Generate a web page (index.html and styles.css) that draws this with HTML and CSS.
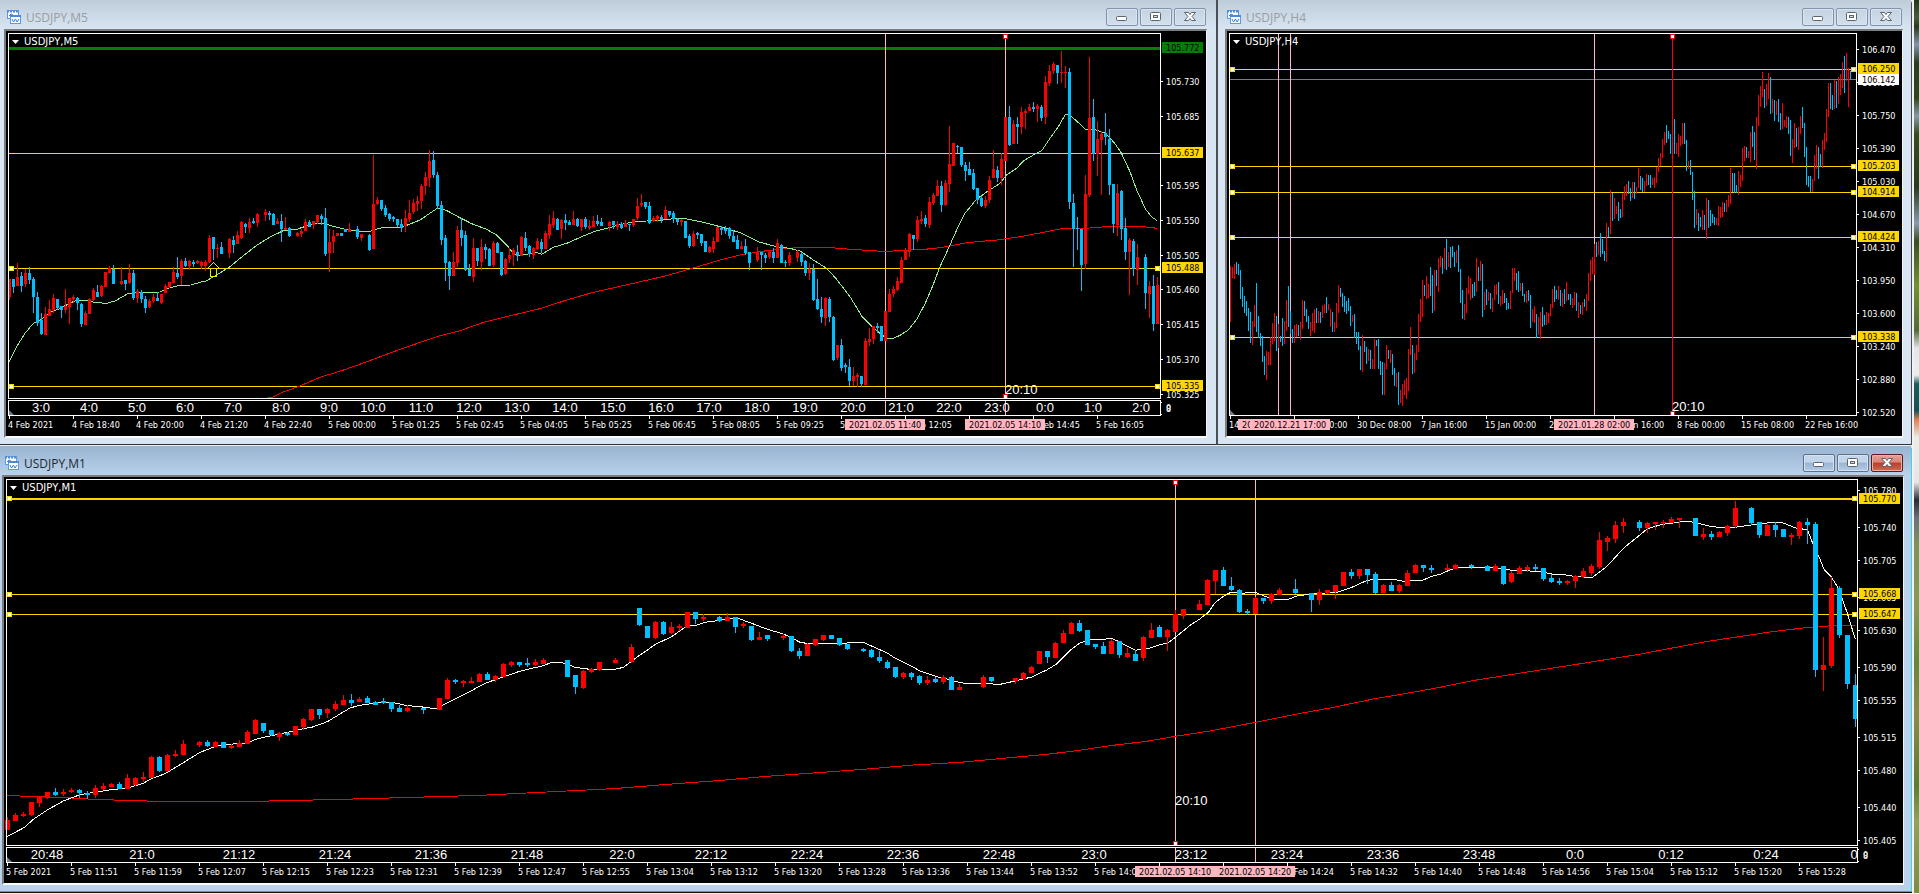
FILE: index.html
```html
<!DOCTYPE html>
<html lang="en">
<head>
<meta charset="utf-8">
<title>USDJPY charts</title>
<link rel="stylesheet" href="styles.css">
</head>
<body>
<svg class="defs" aria-hidden="true">
  <defs>
    <symbol id="chart-icon" viewBox="0 0 14 14">
      <rect x="0.500" y="0.500" width="11" height="8" fill="#fff" stroke="#5a9ae6"/>
      <path d="M0 1.500h12" stroke="#4a8ad8" stroke-width="2" stroke-dasharray="2 1"/>
      <path d="M2 6l2-2 2 1" stroke="#3c7fd6" fill="none"/>
      <rect x="3.500" y="5.500" width="10" height="8" fill="#fff" stroke="#5a9ae6"/>
      <path d="M3 6h11" stroke="#4a8ad8" stroke-width="2"/>
      <path d="M5 9l1.500 3 2-3 1.500 3 2-3" stroke="#3c7fd6" fill="none"/>
    </symbol>
    <symbol id="min-icon" viewBox="0 0 30 16">
      <rect x="9.500" y="7.500" width="10" height="4" rx="1" fill="#fff" stroke="#5b6470"/>
    </symbol>
    <symbol id="max-icon" viewBox="0 0 30 16">
      <rect x="9.500" y="3.500" width="10" height="8" rx="1" fill="#fff" stroke="#5b6470"/>
      <rect x="12.500" y="6.500" width="4" height="2" fill="#cfdcec" stroke="#5b6470"/>
    </symbol>
    <symbol id="close-icon" viewBox="0 0 30 16">
      <path d="M9.500 3.500h4l1.500 2 1.500-2h4l-3.500 4 3.500 4h-4l-1.500-2-1.500 2h-4l3.500-4z" fill="#fff" stroke="#5b6470"/>
    </symbol>
  </defs>
</svg>
<main class="desktop">
  <section class="window window-m5" aria-label="USDJPY,M5">
    <header class="title-bar">
      <svg class="title-icon" aria-hidden="true"><use href="#chart-icon"/></svg>
      <h2 class="title">USDJPY,M5</h2>
      <button class="win-btn" aria-label="Minimize"><svg class="btn-icon"><use href="#min-icon"/></svg></button>
      <button class="win-btn" aria-label="Maximize"><svg class="btn-icon"><use href="#max-icon"/></svg></button>
      <button class="win-btn" aria-label="Close"><svg class="btn-icon"><use href="#close-icon"/></svg></button>
    </header>
    <div class="frame"><svg class="chart" id="m5" viewBox="6 31 1200 405"></svg></div>
  </section>
  <section class="window window-h4" aria-label="USDJPY,H4">
    <header class="title-bar">
      <svg class="title-icon" aria-hidden="true"><use href="#chart-icon"/></svg>
      <h2 class="title">USDJPY,H4</h2>
      <button class="win-btn" aria-label="Minimize"><svg class="btn-icon"><use href="#min-icon"/></svg></button>
      <button class="win-btn" aria-label="Maximize"><svg class="btn-icon"><use href="#max-icon"/></svg></button>
      <button class="win-btn" aria-label="Close"><svg class="btn-icon"><use href="#close-icon"/></svg></button>
    </header>
    <div class="frame"><svg class="chart" id="h4" viewBox="1227 31 675 405"></svg></div>
  </section>
  <section class="window window-m1 active" aria-label="USDJPY,M1">
    <header class="title-bar">
      <svg class="title-icon" aria-hidden="true"><use href="#chart-icon"/></svg>
      <h2 class="title">USDJPY,M1</h2>
      <button class="win-btn" aria-label="Minimize"><svg class="btn-icon"><use href="#min-icon"/></svg></button>
      <button class="win-btn" aria-label="Maximize"><svg class="btn-icon"><use href="#max-icon"/></svg></button>
      <button class="win-btn close" aria-label="Close"><svg class="btn-icon"><use href="#close-icon"/></svg></button>
    </header>
    <div class="frame"><svg class="chart" id="m1" viewBox="4 477 1899 406"></svg></div>
  </section>
</main>
<div class="wallpaper"></div>
<script src="charts.js"></script>
</body>
</html>
```
FILE: styles.css
```css
* { box-sizing: border-box; }

body {
  margin: 0;
  display: flex;
  background: #f0f0f0;
  font-family: "Open Sans", "Noto Sans", sans-serif;
}

.defs { position: absolute; width: 0; height: 0; }

.desktop {
  flex: 1;
  min-width: 0;
  display: grid;
  grid-template-columns: minmax(0, 1217fr) minmax(0, 695fr);
  align-content: start;
}

.wallpaper {
  flex: 0 0 7px;
  border-left: 2px solid #f2f2f2;
  background: linear-gradient(
    #26361e 0%, #4c5a3a 2%, #2a3a22 3%, #8494a8 5%, #2c3c24 7%, #32451f 11%,
    #8899a4 13%, #3a4a22 15%, #2b3a20 21%, #8a9aac 25%, #3d4c25 27%, #768f3a 32%,
    #56683a 37%, #e6e6ea 39%, #ececec 42%, #1f5a5a 43%, #1c5054 46%, #d88058 47%,
    #ecebe8 49%, #e8e6e2 54%, #2a2a30 56%, #6d7078 58%, #7f9160 61%, #8a965c 68%,
    #6a8440 74%, #8b8a50 80%, #5f7a38 88%, #94a060 92%, #7d8a4c 100%);
}

.window {
  display: flex;
  flex-direction: column;
  border-bottom: 1px solid #2e3338;
  border-right: 1px solid #4a4f55;
  margin-bottom: 1px;
  background: #d7e4f2;
}

.window-m5 { padding: 0 9px 6px 4px; }

.window-h4 {
  padding: 0 8px 6px 7px;
  border-left: 1px solid #4a4f55;
  border-top-right-radius: 4px;
}

.window-m1 {
  grid-column: 1 / -1;
  padding: 0 7px 6px 2px;
  background: #b9d1ea;
  border-right-color: #3fd3f0;
  border-bottom-color: #1fb4d0;
  box-shadow: 0 1px #101010;
  border-top-right-radius: 4px;
}

.title-bar {
  height: 29px;
  display: flex;
  align-items: center;
  gap: 2px;
  background: linear-gradient(#bfcddb, #d7e4f2);
}

.window-m5 .title-bar { margin: 0 -9px 0 -4px; padding: 0 10px 0 7px; }
.window-h4 .title-bar { margin: 0 -8px 0 -7px; padding: 0 9px; }

.active .title-bar {
  margin: 0 -7px 0 -2px;
  padding: 0 8px 0 5px;
  background: linear-gradient(#99b4d1, #b9d1ea);
}

.title-icon { flex: none; width: 14px; height: 14px; margin-top: 5px; }

.title {
  flex: 1;
  margin: 6px 0 0 3px;
  font-size: 12px;
  line-height: 16px;
  font-weight: 400;
  color: #9a9da0;
}

.active .title { color: #1e2832; }

.win-btn {
  width: 32px;
  height: 18px;
  margin-top: 5px;
  padding: 0;
  display: flex;
  border: 1px solid #8293ab;
  border-radius: 2px;
  background: linear-gradient(#c5d2e0, #d2dfed);
  box-shadow: inset 0 0 0 1px #d8e4f0;
}

.active .win-btn {
  border-color: #5f6f88;
  background: linear-gradient(#c3d5e9 45%, #9ab4d2 50%, #b4cce6);
  box-shadow: inset 0 0 0 1px #d4e2f2;
}

.active .close {
  border-color: #5c1a1c;
  background: linear-gradient(#e8a195 0%, #d98476 45%, #bb3e28 50%, #cf6a52 100%);
  box-shadow: inset 0 0 0 1px #eab0a6;
}

.btn-icon { width: 30px; height: 16px; }

.frame {
  border: 2px solid #7c7c7c;
  border-right: 1px solid #f4f4f4;
  border-bottom: 2px solid #fbfbfb;
  background: #000;
}

.chart { display: block; width: 100%; height: auto; }

.shape { shape-rendering: crispEdges; }

.axis { font: 9px "DejaVu Sans Condensed", "DejaVu Sans", sans-serif; fill: #fff; }
.caption { font: 10px "DejaVu Sans", sans-serif; fill: #fff; }
.dark { fill: #000; }
.clock { font: 13px "Liberation Sans", Arial, sans-serif; fill: #fff; }
.middle { text-anchor: middle; }
```
FILE: charts.js
```js
const NS = 'http://www.w3.org/2000/svg';
const COLORS = { r: '#ff0000', b: '#00bfff' };
const GOLD = '#ffd700', PINK = '#ffb6c1', WHITE = '#ffffff', SLATE = '#708090';

// Series coordinates are kept at three units per pixel.
const UNIT = 3;

function add(svg, name, attrs, text) {
  const el = document.createElementNS(NS, name);
  for (const key in attrs) el.setAttribute(key, attrs[key]);
  if (text !== undefined) el.textContent = text;
  svg.appendChild(el);
  return el;
}
const box = (svg, x, y, w, h, fill) =>
  add(svg, 'rect', { x, y, width: w, height: h, fill, class: 'shape' });
const outline = (svg, x1, y1, x2, y2) =>
  add(svg, 'rect', { x: x1 + 0.5, y: y1 + 0.5, width: x2 - x1, height: y2 - y1,
    fill: 'none', stroke: WHITE, class: 'shape' });
const label = (svg, x, y, cls, text) => add(svg, 'text', { x, y, class: cls }, text);

function curve(svg, color, top, parts) {
  const pts = parts.flatMap(([dx, list]) => list.split(' ').map(p => {
    const [x, y] = p.split(',').map(Number);
    return (x + dx) / UNIT + ',' + (y / UNIT + top);
  }));
  add(svg, 'polyline', { points: pts.join(' '), fill: 'none', stroke: color, class: 'shape' });
}

// Each token: colour, then high,open,close,low, or just open,close; "-" is an empty slot.
function candles(svg, data, x0, pitch, width, top, right) {
  data.trim().split(/\s+/).forEach((tok, i) => {
    if (tok === '-') return;
    const v = tok.slice(1).split(',').map(n => Math.round(n / UNIT) + top);
    const [hi, a, b, lo] = v.length === 2 ? [v[0], v[0], v[1], v[1]] : v;
    const x = x0 + i * pitch, left = x - (width - 1) / 2;
    box(svg, x, hi, 1, Math.max(1, lo - hi), COLORS[tok[0]]);
    if (width > 1) box(svg, left, a, Math.min(width, right - left), Math.max(1, b - a), COLORS[tok[0]]);
  });
}

function handle(svg, x, y, color) {
  box(svg, x, y, 5, 5, color);
  box(svg, x + 1, y + 1, 3, 3, WHITE);
}

function draw(c) {
  const s = document.getElementById(c.id);
  const { left, right, top, bottom, sub } = c.area;
  const base = sub ? sub[1] : bottom;

  c.levels.forEach(l => {
    box(s, left + 1, l.y, right - left, l.size || 1, l.color || GOLD);
  });
  c.marks.forEach(m => {
    box(s, m.x, top + 1, 1, bottom - top - 1, m.color || PINK);
    if (sub) box(s, m.x, sub[0] + 1, 1, sub[1] - sub[0] - 1, m.color || PINK);
  });
  (c.curves || []).forEach(k => curve(s, k.color, c.dataTop, k.parts));
  candles(s, c.candles, c.x0, c.pitch, c.width, c.dataTop, right);

  label(s, left + 16, top + 12, 'caption', c.title);
  add(s, 'path', { d: `M${left + 4} ${top + 7}h7l-3.500 4z`, fill: WHITE });

  c.levels.filter(l => l.handles).forEach(l => {
    handle(s, left + 1, l.y - 2, GOLD);
    handle(s, right - 5, l.y - 2, GOLD);
  });
  c.marks.filter(m => m.handles).forEach(m => {
    handle(s, m.x - 2, top + 1, '#ff0000');
    handle(s, m.x - 2, bottom - 4, '#ff0000');
  });

  outline(s, left, top, right, bottom);
  if (sub) {
    outline(s, left, sub[0], right, sub[1]);
    box(s, right + 1, sub[0] + 2, 1, 1, WHITE);
    box(s, right + 1, sub[1] - 1, 1, 1, WHITE);
    c.hours.forEach(([x, t]) => label(s, x, sub[0] + 12, 'clock middle', t));
    label(s, right + 6, sub[0] + 11, 'axis', '0');
    label(s, right + 6, sub[0] + 12, 'axis', '8');
  }
  add(s, 'path', { d: `M${left + 1} ${base - 5}l5 5h-5z`, fill: SLATE });
  label(s, c.clock[0], c.clock[1], 'clock', '20:10');

  c.dates.forEach((t, i) => {
    const x = left + 64 * i;
    box(s, x + 1, base + 1, 1, 3, WHITE);
    if (t) label(s, x, base + 13, 'axis', t);
  });
  c.tags.forEach(([x, t]) => {
    box(s, x - 40, base + 4, 80, 11, PINK);
    label(s, x - 36, base + 13, 'axis dark', t);
  });

  c.prices.forEach(([y, t]) => {
    box(s, right + 1, y, 2, 1, WHITE);
    label(s, right + 6, y + 4, 'axis', t);
  });
  c.boxes.forEach(([y, t, color]) => {
    box(s, right + 2, y, 41, 11, color || GOLD);
    label(s, right + 6, y + 9, 'axis dark', t);
  });
}

draw({
  id: 'm5', title: 'USDJPY,M5', dataTop: 0, x0: 9, pitch: 4, width: 3,
  area: { left: 8, right: 1160, top: 33, bottom: 398, sub: [400, 415] },
  levels: [{ y: 47, size: 3, color: '#008000' }, { y: 153 }, { y: 268, handles: true }, { y: 386, handles: true }],
  marks: [{ x: 885 }, { x: 1005, handles: true }],
  clock: [1005, 394],
  hours: ['3:0', '4:0', '5:0', '6:0', '7:0', '8:0', '9:0'].map((t, i) => [41 + 48 * i, t]).concat(
    ['10:0', '11:0', '12:0', '13:0', '14:0', '15:0', '16:0', '17:0', '18:0', '19:0', '20:0',
     '21:0', '22:0', '23:0', '0:0', '1:0', '2:0'].map((t, i) => [373 + 48 * i, t])),
  dates: ['4 Feb 2021', '4 Feb 18:40', '4 Feb 20:00', '4 Feb 21:20', '4 Feb 22:40', '5 Feb 00:00',
    '5 Feb 01:25', '5 Feb 02:45', '5 Feb 04:05', '5 Feb 05:25', '5 Feb 06:45', '5 Feb 08:05',
    '5 Feb 09:25', '5 Feb 10:45', '5 Feb 12:05', '', '5 Feb 14:45', '5 Feb 16:05'],
  tags: [[885, '2021.02.05 11:40'], [1005, '2021.02.05 14:10']],
  prices: [[81, '105.730'], [116, '105.685'], [185, '105.595'], [220, '105.550'], [255, '105.505'],
    [289, '105.460'], [324, '105.415'], [359, '105.370'], [394, '105.325']],
  boxes: [[42, '105.772', '#008000'], [147, '105.637'], [262, '105.488'], [380, '105.335']],
  curves: [
    { color: '#ff0000', parts: [
      [0, '805,1193 820,1191 850,1176 900,1158 960,1132 1040,1107 1120,1078 1200,1048'],
      [1200, '90,1017 120,1007 180,992 250,967 340,945 420,926 500,900 580,877 700,850 800,827 880,804 960,780 1020,765 1100,752 1140,748 1200,742'],
      [2400, '80,742 140,747 230,753 280,753 400,746 450,738 500,728 590,720 660,710 730,697 790,685 870,684 930,679 1020,679 1072,685']] },
    { color: '#90ee90', parts: [
      [0, '28,1085 50,1040 75,1000 100,970 124,958 150,937 180,926 208,910 232,900 260,902 290,908 320,910 345,903 385,880 420,877 480,876 500,866 540,856 572,855 600,847 618,843 650,825 690,800 730,767 770,736 810,711 850,692 890,688 940,671 970,669 1000,679 1045,690 1105,696 1120,690 1150,682 1200,682'],
      [1200, '20,676 60,660 110,626 124,626 145,634 170,648 215,671 260,688 290,705 320,735 340,760 355,766 380,763 408,757 425,763 460,742 500,730 550,708 590,692 625,684 660,674 700,666 740,663 790,660 830,655 860,657 910,667 960,680 1020,698 1080,727 1130,740 1170,745 1200,753'],
      [2400, '40,780 80,805 110,838 150,890 185,948 215,978 245,1005 262,1015 280,1015 300,1006 325,990 350,958 375,912 400,853 420,800 440,757 470,690 495,640 530,597 560,576 600,550 620,525 650,505 670,483 700,465 725,452 750,415 775,380 796,343 806,343 830,363 858,390 880,387 915,399 940,425 962,455 990,515 1010,570 1037,628 1055,651 1072,662']] }],
  candles: `
    r837,837,890,900 b837,837,860,878 r790,831,857,857 b817,828,857,876 r806,820,852,860 b801,820,840,852
    b830,838,890,938 b877,890,968,978 b940,960,1001,1005 r922,942,1005,1005 r900,927,948,948 r882,895,930,938
    b897,897,925,930 b918,918,930,953 r867,918,930,940 r893,893,921,972 r885,892,897,910 b892,895,910,930
    b908,912,972,981 r934,940,975,975 r893,898,941,941 r865,871,899,903 b855,877,890,890 r855,858,888,891
    r816,860 r797,803,820,820 b795,807,852,852 - r801,843,852,855 b840,840,852,870 r792,820,850,852
    b810,819,893,900 r867,873,893,910 b870,876,897,910 b888,897,924,938 r897,903,921,924 r882,892,903,908
    b877,894,903,903 r882,882,908,911 r852,858,879,879 r846,846,861,865 r801,816,850,850 b770,819,831,837
    r777,784,828,855 b774,784,797,800 r781,784,797,810 b780,786,792,801 r780,784,790,792 r782,786,797,808
    r780,786,798,813 r705,713,786,790 b711,711,747,780 r732,743,747,774 b726,741,762,762 -
    r714,717,759,774 b708,720,735,759 r693,705,732,732 r663,666,714,717 b670,672,682,698 r654,666,684,699
    b654,663,669,672 r639,643,669,681 - r627,636,645,663 b633,639,645,660 b639,643,675,675 r654,663,672,672
    b642,663,687,726 r651,684,690,690 b682,684,708,710 - r696,699,708,711 r687,692,702,711 r657,666,693,693
    b660,666,681,681 r663,663,675,687 r645,645,666,672 b642,648,657,675 b624,654,762,768 r687,726,759,816
    r690,708,726,759 r699,708 b699,708 b687,696 r669,687,695,695 - b678,687,711,717 r702,702,714,723 -
    b703,705,750,753 r465,612,747,747 r591,600,613,615 b600,600,627,633 b616,624,645,651 b640,642,657,662
    b648,651,657,666 b657,657,675,681
    b657,672,684,696 r630,654,678,696 r600,639,657,666 r597,609,636,642 r588,603,612,633 r551,558,603,627
    r516,531,558,585 r450,483,534,561 b453,480,525,534 b516,525,618,627 b603,615,720,735 b705,714,789,843
    b783,786,828,870 r756,786,828,828 r678,690,789,801 b654,690,714,738 b693,705,810,813 b792,807,828,828
    r714,744,831,846 b744,744,783,798 r717,741,786,810 b732,741,750,777 b744,747,798,798 r723,729,795,801
    b726,729,759,759 b756,756,825,828 r774,777,822,825 r744,765,777,789 r744,750,765,798 b735,756,768,783
    r708,711,768,768 b696,714,744,753 b735,738,762,771 r741,744,765,777 r714,723,747,750 b717,726,747,759
    r693,699,747,747 r645,672,705,717 r633,654,675,684 b654,657,690,690 r657,660,687,717 b642,660,669,690
    b660,666,675,675 r633,657,675,675 b654,657,678,681 r657,657,681,693 b651,657,681,687 r660,678,684,690
    r648,663,681,681 b645,663,672,678 b654,666,678,678 - r663,666,678,693 b663,663,675,687 r663,672,681,690
    b666,672,684,687 r660,669,681,681 b672,672,675,693 r657,657,675,681 r594,618,654,660 r582,609,615,621
    b606,606,621,627 b606,618,669,672 r648,654,663,666 r645,648,657,666 b645,651,660,669 r618,630,657,657
    b633,633,645,651 b633,639,657,669 b654,657,666,675 r657,660,666,678 b663,714 b702,708,738,744
    r693,702,738,741 b696,699,705,717 b702,702,729,738 b723,756 r738,741,756,759 r711,723,747,759 r681,726
    b678,684,690,705 b678,687,693,702 b681,684,708,717 b690,708,726,726 b705,720,747,747 r723,738,747,747
    b717,738,759,765 b756,756,789,810 - r741,756,780,786 b756,756,765,810 b759,765,774,789 r753,756,771,777
    b744,756,774,789 r717,729,774,774 b732,735,789,789 b780,786,789,801 r756,765,789,798 - r750,756,774,786
    b756,762,786,798 b780,783,819,828 r789,807,819,840 b792,807,900,903 b837,897,927,930 b891,927,951,969
    r891,894,954,978 b891,897,951,966 b948,951,1080,1083 r1035,1035,1074,1080 b1017,1035,1104,1113
    b1089,1095,1101,1119 b1077,1101,1143,1158 r1101,1128,1143,1158 r1119,1125,1131,1161 b1128,1128,1152,1161
    r1014,1023,1155,1155 r984,1017,1026,1038 r978,978,1017,1032 b969,978,984,999 b978,1023 r933,1023
    r867,882,936,936 r858,867,882,891 r831,843,870,873 r771,780,849,849 r744,750,780,780 r699,702,756,771
    b705,705,717,750 r648,660,717,726 r633,657,663,672 b645,654,672,681 r591,606,675,684 r579,585,609,615
    r540,558,588,588 b543,558,615,636 r540,549,615,618 r378,492,552,576 r429,498 b435,438,441,459
    b441,441,495,501 b486,495,513,543 b486,507,525,525 b507,519,567,570 b564,564,600,612 b588,594,618,621
    r588,600,618,624 r528,540,600,609 r450,507,534,534 b498,510,534,546 r459,477,534,555 r351,483
    b318,351,435,438 r360,372,432,432 b351,372,381,432 r321,336,381,402 r327,333,339,387 r312,321,333,333
    b306,321,327,336 r312,318,327,366 b315,321,354,363 r228,246,351,372 r195,213,249,258 r186,192,213,222
    b195,195,219,252 r153,216,219,249 r198,216,219,264 b204,216,606,627 b582,609,687,801 b651,684,687,750
    b687,687,795,873 r525,582,792,807 r171,354,585,591 b297,351,462,483 r363,417,462,528 r393,402,420,585
    b339,399,411,435 b387,417,555,585 b552,552,672,699 r552,579,675,708 b570,573,687,720 b654,684,756,780
    r714,720,756,885 b717,723,807,828 r732,771,810,855 - b762,771,879,927 r843,858,882,954 b825,858,972,993
    r831,855,972,972`
});

// Buy arrow under the 21:00 breakout.
add(document.getElementById('m5'), 'path', {
  d: 'M213.500 262.500l6 6h-3v8h-6v-8h-3z', fill: 'none', stroke: '#e8e800', class: 'shape' });

draw({
  id: 'h4', title: 'USDJPY,H4', dataTop: 0, x0: 1230, pitch: 2, width: 1,
  area: { left: 1229, right: 1856, top: 33, bottom: 415 },
  levels: [{ y: 69, handles: true }, { y: 79, color: SLATE }, { y: 166, handles: true },
    { y: 192, handles: true }, { y: 237, handles: true }, { y: 337, handles: true }],
  marks: [{ x: 1278 }, { x: 1290 }, { x: 1594 }, { x: 1672, color: '#ff0000', handles: true }],
  clock: [1672, 411],
  dates: ['14 Dec 2020', '22 Dec 00:00', '30 Dec 08:00', '7 Jan 16:00', '15 Jan 00:00', '22 Jan 08:00',
    '29 Jan 16:00', '8 Feb 00:00', '15 Feb 08:00', '22 Feb 16:00'],
  tags: [[1278, '2020.12.18 17:00'], [1290, '2020.12.21 17:00'], [1594, '2021.01.28 02:00']],
  prices: [[49, '106.470'], [82, '106.110'], [115, '105.750'], [148, '105.390'], [181, '105.030'],
    [214, '104.670'], [247, '104.310'], [280, '103.950'], [313, '103.600'], [346, '103.240'],
    [379, '102.880'], [412, '102.520']],
  boxes: [[63, '106.250'], [74, '106.142', WHITE], [160, '105.203'], [186, '104.914'], [231, '104.424'],
    [331, '103.338']],
  candles: `
    r798,966 r801,834 r792,837 b786,822 b792,825 b810,897 b861,921 b888,939 b903,948 b924,993
    b936,1029 r963,1035 r915,981 b849,996 b948,1014 b999,1038 b1008,1086 b1068,1125 r1053,1140 r1056,1095
    r1012,1095 r969,1032 r939,1023 b948,1053 r972,1044 b1008,1026 b954,1038 r963,1032 r900,993 b858,981
    b933,1003 b987,1029 r975,1029 r972,1011 b975,1008 r966,1020 r900,987 b903,948 b927,966 b948,987
    r966,1008 r939,993 r927,999 b924,969 r933,969 b936,969 r915,954 r912,939 b891,939 r912,930
    r927,981 b936,996 r966,996 r909,984 r855,939 b864,891 b879,921 b888,936 b903,942 b894,933
    b918,978 r945,966 b942,1014 b996,1032 b996,1050 b1038,1110 r1005,1116 b1023,1056 b1041,1092 r1047,1083
    b1050,1107 r1077,1107 r1017,1107 b1020,1038 b1017,1107 b1083,1125 b1086,1185 r1089,1185 r1035,1107 b1050,1077
    r1050,1089 b1062,1125 b1104,1158 r1119,1161 b1116,1215 r1170,1209 r1152,1218 r1140,1185 r1134,1197 r1047,1173
    r981,1065 b1035,1122 r1059,1119 r1035,1080 r942,1056 r897,966 r840,951 b855,888 r828,897 r852,894
    b801,888 b825,939 r810,933 b810,858 r774,876 r768,801 b774,822 r744,807 b717,810 r756,801
    b741,804 b738,771 b756,801 r750,789 b735,816 b807,909 b870,957 r912,960 r864,939 r828,882
    r834,900 b852,894 b846,888 r774,876 b801,843 r783,843 b792,951 r876,930 b867,915 r876,903
    b879,927 r894,936 r855,900 r852,885 b846,912 r888,918 r870,912 b879,909 b894,930 b909,927
    r873,927 r804,879 r804,843 b819,870 b813,876 r849,873 b849,888 b882,906 r873,909 b870,903
    b885,984 r927,966 r918,969 b942,1014 r951,1005 r936,1017 b921,981 b945,975 r936,975 r939,969
    r912,948 r867,924 b858,906 b870,897 r858,900 b870,918 r879,921 b867,912 r846,903 b882,900
    b882,915 r894,924 r876,915 b879,933 r906,954 b915,942 r906,945 b897,921 r882,933 r819,903
    r780,843 r771,822 r732,825 b726,771 r723,765 b699,771 b717,762 b753,783 r669,786 b681,711
    r570,702 b579,663 r594,657 r618,642 b606,663 b627,654 r579,651 r558,600 r552,588 b543,582
    b564,603 r546,594 b546,597 r561,582 r504,564 b528,570 b534,576 r543,576 r522,558 b525,555
    b525,564 r534,555 r531,564 r501,549 r474,516 r459,498 r417,474 r396,435 b375,429 b393,417
    b402,462 r390,462 b357,462 r429,462 r402,471 r408,438 r369,432 b369,432 b420,513 r483,507
    b480,525 b516,600 b573,684 r627,675 b639,693 b651,681 r630,690 b645,690 r594,717 b600,684
    b630,678 b642,669 b651,675 r654,675 r618,678 r621,654 r606,651 b609,636 r600,636 r585,621
    r504,612 b519,576 b519,579 b555,579 r513,585 r525,561 r444,543 r438,483 b441,474 r453,474
    r396,486 b378,441 b396,480 r351,507 r285,378 r258,321 r216,291 b267,324 r252,318 r219,297
    b231,342 r297,339 b300,363 r303,345 b297,366 b339,390 r309,387 r360,381 r348,384 b351,402
    b360,468 r417,489 r369,444 b384,441 r381,450 r348,402 b321,384 b369,471 b441,555 b528,561
    b528,576 r537,576 r465,543 r435,507 b441,537 b462,501 r420,504 r399,450 r327,426 r249,351
    b249,327 b285,330 r240,327 b243,324 r231,312 r222,285 r186,264 b168,279 r159,243 r204,321
    b213,237`
});

draw({
  id: 'm1', title: 'USDJPY,M1', dataTop: 440, x0: 7, pitch: 8, width: 5,
  area: { left: 6, right: 1857, top: 479, bottom: 845, sub: [847, 862] },
  levels: [{ y: 498, size: 2, handles: true }, { y: 594, handles: true }, { y: 614, handles: true }],
  marks: [{ x: 1175, handles: true }, { x: 1255 }],
  clock: [1175, 805],
  hours: [[47, '20:48'], [142, '21:0'], [239, '21:12'], [335, '21:24'], [431, '21:36'], [527, '21:48'],
    [622, '22:0'], [711, '22:12'], [807, '22:24'], [903, '22:36'], [999, '22:48'], [1094, '23:0'],
    [1191, '23:12'], [1287, '23:24'], [1383, '23:36'], [1479, '23:48'], [1575, '0:0'], [1671, '0:12'],
    [1766, '0:24'], [1854, '0']],
  dates: ['2021', '11:51', '11:59', '12:07', '12:15', '12:23', '12:31', '12:39', '12:47', '12:55',
    '13:04', '13:12', '13:20', '13:28', '13:36', '13:44', '13:52', '14:00', '', '', '14:24',
    '14:32', '14:40', '14:48', '14:56', '15:04', '15:12', '15:20', '15:28'].map(t => t && '5 Feb ' + t),
  tags: [[1175, '2021.02.05 14:10'], [1255, '2021.02.05 14:20']],
  prices: [[490, '105.780'], [527, '105.740'], [560, '105.705'], [597, '105.665'], [630, '105.630'],
    [667, '105.590'], [700, '105.555'], [737, '105.515'], [770, '105.480'], [807, '105.440'], [840, '105.405']],
  boxes: [[493, '105.770'], [588, '105.668'], [608, '105.647']],
  curves: [
    { color: '#ff0000', parts: [
      [0, '22,1066 100,1070 200,1073 280,1078 400,1082 480,1084 760,1084 900,1081 1060,1077 1240,1072 1440,1066'],
      [1440, '200,1056 400,1046 600,1030 700,1023 860,1009 1000,999 1150,988 1300,975 1440,967'],
      [2880, '150,953 260,943 350,932 450,917 560,904 646,889 750,873 886,847 1000,824 1120,802 1240,777 1340,760 1440,742'],
      [4317, '100,722 240,700 400,675 600,643 800,605 1000,575 1100,563 1180,557 1247,556']] },
    { color: '#fffff0', parts: [
      [0, '22,1189 72,1163 100,1138 142,1110 190,1083 240,1064 290,1056 340,1048 380,1045 430,1030 454,1016 478,1008 502,997 550,968 600,937 650,918 700,912 740,910 766,898 800,890 840,882 880,873 910,866 935,862 982,845 1020,822 1050,804 1078,796 1120,790 1155,786 1180,788 1222,797 1260,800 1290,804 1310,804 1342,788 1400,760 1440,738'],
      [1440, '20,728 70,711 118,694 190,677 215,667 240,667 262,672 285,682 330,688 405,688 430,682 455,664 478,646 500,632 526,613 575,590 610,565 630,558 650,555 675,547 705,543 740,538 760,535 780,537 815,550 860,567 910,582 940,596 960,607 980,610 1090,610 1130,606 1155,609 1190,625 1220,638 1246,655 1290,676 1320,693 1370,710 1400,717 1440,728'],
      [2880, '40,732 80,731 120,733 165,723 215,711 260,690 290,672 334,628 358,610 390,599 430,598 455,595 475,604 526,631 570,624 600,614 624,609 646,592 694,553 718,538 745,517 766,487 790,469 812,457 840,460 886,457 910,467 940,477 985,478 1010,468 1060,461 1130,457 1175,442 1222,421 1250,417 1300,418 1330,424 1390,420 1415,409 1440,403'],
      [4317, '30,391 60,382 160,382 200,388 220,391 300,394 340,402 380,405 410,410 460,412 505,378 553,325 600,287 625,266 670,253 740,244 760,246 815,259 865,265 900,260 950,253 1000,247 1030,248 1075,266 1105,268 1125,320 1140,350 1155,388 1177,411 1201,450 1225,520 1249,598']] }],
  candles: `
    r1131,1140,1170,1170 r1119,1125,1143,1143 r1116,1122,1128,1132 r1086,1086,1125,1128 r1068,1071,1089,1101
    r1056,1056,1074,1077 b1044,1056,1065,1068 r1047,1056,1062,1067 r1044,1050,1056,1060 b1047,1050,1059,1074
    b1053,1060,1065,1077 r1035,1044,1065,1074 r1029,1038,1047,1050 r1028,1032,1041,1041 b1026,1032,1047,1047
    r1002,1014,1047,1047 r1011,1014,1035,1037 r996,1011,1017,1026 r948,951,1014,1014 b948,951,993,996
    r942,945,993,996 r930,942,948,951 r900,912,945,945 - r903,906,915,921 b900,906,918,921 r903,906,921,921
    b906,924 r912,918,923,927 r900,909,921,921 r870,876,912,912 r837,840,882,882 b849,849,873,879
    b870,870,885,888 r876,879,891,903 b876,879,885,888 r858,885 r834,837,861,870 r807,807,840,843
    b807,807,825,837 r804,807,819,834 r783,792,807,813 r765,780,795,795 b762,780,789,798 r771,777,786,786
    b768,774,789,789 b783,786,795,795 b774,784,789,791 b786,786,807,816 b795,804,816,816 r795,804,813,816 -
    b803,803,809,822 - r774,810 r714,720,777,777 b717,720,726,731 r720,723,729,741 r711,723,729,729
    r699,702,726,726
    b696,702,720,720 r705,708,720,726 r669,672,711,711 r663,666,675,681 b666,666,675,681 b654,669,675,681
    r657,666,675,678 r654,660,672,672 - - b660,711 b705,705,741,762 r690,693,744,747 r684,687,696,699
    r666,666,690,692 - r654,660,669,669 - r612,621,666,669 b504,504,555,558 b558,594 r543,546,594,597
    b543,546,582,585 r546,561,579,582 r552,558,564,573 r516,564 b516,516,537,552 r522,531,537,543 -
    b528,531,543,546 r519,531,543,543 b531,531,561,579 r546,552,558,564 b558,558,600,603 r576,591,600,600
    b585,585,597,603 - r582,588,594,600 b588,588,633,636 b624,633,648,657 r609,612,648,648 r597,597,615,618
    r585,585,600,603 b585,597 b594,594,615,618 b612,612,627,630 - b624,627,633,636 b627,630,651,654
    b633,651,663,669 b660,666,684,687 b681,681,711,714 r696,699,711,717 b696,699,711,720 b705,708,729,735
    r708,720,729,735 b711,717,726,729 r705,711,726,732 b708,711,750,750 r732,741,750,750
    - - r705,711,741,744 b711,711,723,726 - - r714,714,723,732 r696,699,717,717 r678,681,699,699 r633,672
    b633,633,651,669 r606,609,654,654 r570,579,609,609 r546,549,582,582 b540,549,573,576 b570,615
    b612,612,621,627 b606,618,642,642 r597,603,642,642 b603,603,645,654 r624,639,651,654 b630,642,663,663
    r588,591,654,663 r549,570,594,594 b555,561,591,591 r567,570,591,633 r510,522,576,576 r507,507,528,537 -
    r480,492,510,510 r417,420,495,495 r390,390,423,462 b381,390,438,438 b411,438,450,453 b447,450,516,519
    b507,513,519,524 r471,474,522,522 b474,474,483,492 r459,462,483,492 r444,450,465,465 - b417,447,459,462
    - b459,459,480,516 r447,456,480,495 r450,450,459,462 r435,435,456,477 r396,438 b387,396,408,417
    r387,387,408,417 b387,387,405,432 b396,402,459,462 r432,435,459,459 b426,435,453,453 r432,435,453,459
    r390,399,438,438 r372,375,399,399 b375,375,384,396 b375,384,390,399 -
    r372,384,390,390 r372,375,387,387 - b372,375,381,387 - b375,378,393,393 r372,378,393,393 b378,378,432,435
    r393,399,426,429 r378,384,402,402 r375,381,390,396 b372,381,387,393 b384,384,417,423 b402,414,426,429
    b414,423,429,435 r420,423,429,435 r405,408,423,444 r384,393,411,414 r372,378,399,408 r276,300,381,387
    r288,294,306,333 r243,255,297,309 r234,246,258,279 - b240,246,264,273 r246,249,264,279 r246,246,252,270
    r240,246,249,264 r231,237,249,249 r234,234,240,264 - b234,288 r264,282,291,300 b273,282,291,300
    r273,276,291,291 r255,258,279,288 r183,204,258,264 - b201,204,249,255 b246,246,285,294 r252,255,288,288
    b246,255,270,291 b267,291 r279,285,291,315 r243,246,288,297 b234,246,255,312 b246,252,690,711
    r591,675,690,753 r411,444,678,684 b438,444,585,594 b585,585,732,747 b702,735,837,861`
});
```
